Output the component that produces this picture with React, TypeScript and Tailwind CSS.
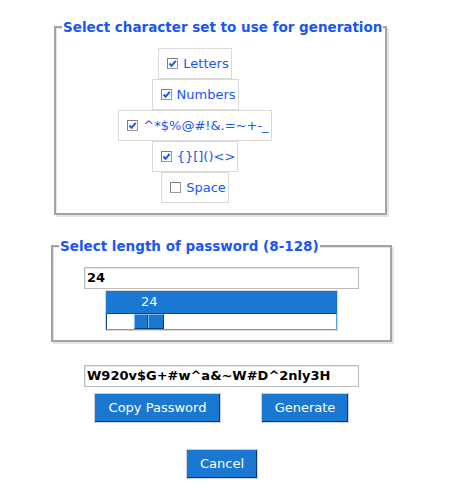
import { ReactNode } from 'react';

const FONT = { fontFamily: '"DejaVu Sans", Verdana, sans-serif' };

const charsets = [
  { label: 'Letters', checked: true },
  { label: 'Numbers', checked: true },
  { label: '^*$%@#!&.=~+-_', checked: true },
  { label: '{}[]()<>', checked: true },
  { label: 'Space', checked: false },
];

function CheckBox({ checked }: { checked: boolean }) {
  return (
    <svg width="11" height="11" viewBox="0 0 11 11" className="shrink-0">
      <rect x="0.5" y="0.5" width="10" height="10" fill="#ffffff" stroke="#9a9a9a" />
      <path d="M0.5 10.5V0.5H10.5" fill="none" stroke="#7d7d7d" />
      {checked && <path d="M2.5 5.5L4.6 7.8L8.7 2.8" fill="none" stroke="#1a56f0" strokeWidth="2" />}
    </svg>
  );
}

function Frame({ title, className, children }: { title: string; className: string; children: ReactNode }) {
  return (
    <div
      className={`relative border-2 border-[#a3a3a3] shadow-[inset_1px_1px_0_#e4e4e4,2px_2px_0_#e4e4e4] ${className}`}
    >
      <span className="absolute -top-[9px] left-[6px] bg-white px-[1px] text-[13.5px] leading-4 font-bold text-[#1a56f5]">
        {title}
      </span>
      {children}
    </div>
  );
}

function Button({ label, className }: { label: string; className: string }) {
  return (
    <button
      className={`flex h-[30px] items-center justify-center border border-[#cdd3d9] bg-[#1a78d2] text-[13px] text-white shadow-[inset_-1px_-1px_0_#0c3d6b] ${className}`}
    >
      {label}
    </button>
  );
}

function Entry({ value }: { value: string }) {
  return (
    <div className="ml-[84px] flex h-[22px] w-[275px] items-center border border-[#bdbdbd] shadow-[inset_1px_1px_0_#e6e6e6] pl-[2px] text-[13px] font-bold text-black">
      {value}
    </div>
  );
}

export default function App() {
  return (
    <div className="h-[498px] w-[449px] overflow-hidden bg-white pt-[26px]" style={FONT}>
      <Frame title="Select character set to use for generation" className="ml-[54px] h-[189px] w-[333px]">
        <div className="flex w-[278px] flex-col items-center pt-[20px]">
          {charsets.map((item) => (
            <div
              key={item.label}
              className="flex h-[31px] items-center gap-[5px] border border-[#dadada] pl-[8px] pr-[2px] text-[13px] text-[#1a56f5]"
            >
              <CheckBox checked={item.checked} />
              <span>{item.label}</span>
            </div>
          ))}
        </div>
      </Frame>

      <Frame title="Select length of password (8-128)" className="ml-[51px] mt-[30px] h-[97px] w-[341px]">
        <div className="pt-[20px]">
          <div className="ml-[31px] flex h-[22px] w-[275px] items-center border border-[#bdbdbd] shadow-[inset_1px_1px_0_#e6e6e6] pl-[2px] text-[13px] font-bold text-black">
            24
          </div>
          <div className="ml-[52px] mt-px w-[233px] border border-[#d6d6d6]">
            <div className="flex h-[22px] items-center bg-[#1a78d2] pl-[35px] text-[13px] text-white">24</div>
            <div className="flex h-[17px] items-center border border-t-[#0d4a85] border-l-[#0d4a85] border-r-[#5aa2e6] border-b-[#5aa2e6] bg-white pl-[27px]">
              <div className="flex h-[15px] w-[30px] border border-t-[#7fbaf0] border-l-[#7fbaf0] border-r-[#0c3d6b] border-b-[#0c3d6b] bg-[#1a78d2]">
                <div className="h-full w-[13px] border-r border-r-[#0c3d6b]" />
                <div className="h-full w-px bg-[#8cc2f2]" />
              </div>
            </div>
          </div>
        </div>
      </Frame>

      <div className="mt-[23px]">
        <Entry value="W920v$G+#w^a&~W#D^2nly3H" />
      </div>

      <div className="mt-[6px] flex">
        <Button label="Copy Password" className="ml-[94px] w-[127px]" />
        <Button label="Generate" className="ml-[40px] w-[88px]" />
      </div>

      <div className="mt-[26px] flex">
        <Button label="Cancel" className="ml-[186px] w-[72px]" />
      </div>
    </div>
  );
}
